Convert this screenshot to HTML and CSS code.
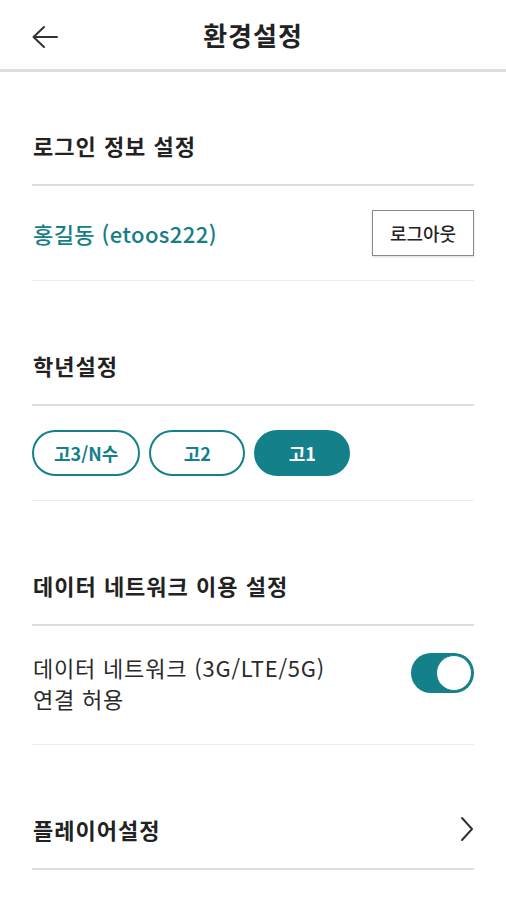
FILE: index.html
```html
<!DOCTYPE html>
<html lang="ko">
<head>
  <meta charset="UTF-8">
  <title>환경설정</title>
  <link rel="stylesheet" href="styles.css">
</head>
<body>

  <header class="top-bar">
    <button class="back-button" aria-label="뒤로">
      <svg width="28" height="24" viewBox="0 0 28 24">
        <path d="M26 12H3M13 2L2.5 12L13 22" fill="none" stroke="#333" stroke-width="2" stroke-linecap="round" stroke-linejoin="round"/>
      </svg>
    </button>
    <h1>환경설정</h1>
  </header>

  <main class="settings">
    <h2 class="section-title">로그인 정보 설정</h2>
    <div class="row">
      <span class="user-name">홍길동 (etoos222)</span>
      <button class="logout-btn">로그아웃</button>
    </div>

    <h2 class="section-title">학년설정</h2>
    <div class="row grade-row">
      <button class="grade-pill">고3/N수</button>
      <button class="grade-pill">고2</button>
      <button class="grade-pill active">고1</button>
    </div>

    <h2 class="section-title">데이터 네트워크 이용 설정</h2>
    <div class="row network-row">
      <p class="network-text">데이터 네트워크 (3G/LTE/5G)<br>연결 허용</p>
      <span class="toggle on"><span class="knob"></span></span>
    </div>

    <h2 class="section-title link-title">
      플레이어설정
      <svg width="14" height="26" viewBox="0 0 14 26">
        <path d="M2 2L12 13L2 24" fill="none" stroke="#333" stroke-width="2" stroke-linecap="round" stroke-linejoin="round"/>
      </svg>
    </h2>
  </main>

</body>
</html>
```

FILE: styles.css
```css
body {
  margin: 0;
  padding: 0;
  font-family: "Noto Sans CJK KR", "Noto Sans", sans-serif;
  background: #fff;
  color: #222;
}

.top-bar {
  position: relative;
  display: flex;
  justify-content: center;
  align-items: center;
  height: 69px;
  border-bottom: 3px solid #dedede;
}

.top-bar h1 {
  margin: 0;
  font-size: 26px;
  font-weight: 700;
  letter-spacing: 1px;
  color: #222;
}

/* back arrow sits over the centred title bar */
.back-button {
  position: absolute;
  left: 31px;
  top: 25px;
  padding: 0;
  border: none;
  background: none;
  display: flex;
}

.settings {
  padding: 0 32px;
}

.section-title {
  margin: 0;
  padding: 64px 0 19px 1px;
  line-height: 40px;
  font-size: 22px;
  font-weight: 700;
  color: #222;
  letter-spacing: 1px;
  border-bottom: 2px solid #dcdcdc;
}

.section-title:first-child {
  padding-top: 53px;
}

.link-title {
  display: flex;
  justify-content: space-between;
  align-items: center;
}

.row {
  display: flex;
  justify-content: space-between;
  align-items: center;
  padding: 24px 0;
  border-bottom: 1px solid #ececec;
}

.user-name {
  font-size: 22px;
  font-weight: 500;
  color: #167e87;
  padding-left: 1px;
  letter-spacing: 0.4px;
}

.logout-btn {
  width: 102px;
  height: 46px;
  border: 1px solid #8a8a8a;
  background: #fff;
  font-family: inherit;
  font-size: 18px;
  font-weight: 500;
  color: #222;
  box-shadow: 0 1px 2px rgba(0,0,0,0.15);
}

.grade-row {
  justify-content: flex-start;
  gap: 9px;
}

.grade-pill {
  min-width: 96px;
  height: 46px;
  padding: 0 20px;
  border: 2px solid #13808a;
  border-radius: 23px;
  background: #fff;
  font-family: inherit;
  font-size: 18px;
  font-weight: 700;
  color: #13808a;
}

.grade-pill.active {
  background: #13808a;
  color: #fff;
}

.network-row {
  align-items: flex-start;
  padding: 26px 0 30px 0;
}

.network-text {
  margin: 0;
  font-size: 22px;
  line-height: 31px;
  letter-spacing: 0.8px;
  color: #2a2a2a;
  padding-left: 1px;
}

.toggle {
  display: flex;
  justify-content: flex-end;
  align-items: center;
  width: 63px;
  height: 40px;
  margin-top: 1px;
  box-sizing: border-box;
  border-radius: 20px;
  background: #13808a;
  padding: 2px;
}

.knob {
  width: 36px;
  height: 36px;
  border-radius: 50%;
  background: #fff;
  box-sizing: border-box;
  border: 1px solid #13808a;
}
```
